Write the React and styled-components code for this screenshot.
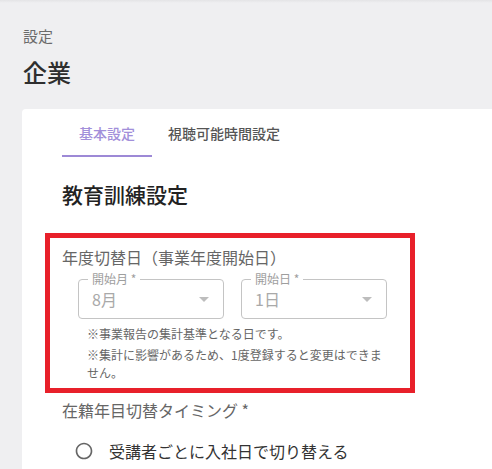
import React from "react";
import styled, { createGlobalStyle } from "styled-components";

const Global = createGlobalStyle`
  html, body { margin: 0; padding: 0; }
  body {
    background: linear-gradient(#e4e4e6 0, #efeff1 3px, #efeff1 100%);
    font-family: "Noto Sans CJK JP", "Noto Sans", sans-serif;
    min-height: 469px;
    overflow: hidden;
  }
`;

const Page = styled.div`
  padding: 26px 0 0 22px;
  width: 470px;
`;

const Breadcrumb = styled.div`
  font-size: 15px;
  line-height: 20px;
  color: #6b6b6b;
  padding-left: 1px;
`;

const Title = styled.h1`
  margin: 10px 0 0 1px;
  font-size: 24px;
  line-height: 32px;
  font-weight: 500;
  color: #2e2e2e;
`;

const Card = styled.div`
  margin-top: 21px;
  background: #fff;
  border-radius: 4px 0 0 0;
  padding: 0 0 40px 40px;
  min-height: 400px;
`;

const Tabs = styled.div`
  display: flex;
  height: 48px;
`;

const Tab = styled.div`
  box-sizing: border-box;
  min-width: 90px;
  padding: 0 16px;
  display: flex;
  align-items: center;
  justify-content: center;
  font-size: 14px;
  font-weight: 500;
  color: ${(p) => (p.$active ? "#a28fda" : "#555")};
  border-bottom: 2px solid ${(p) => (p.$active ? "#9d89d6" : "transparent")};
  padding-top: 2px;
`;

const SectionTitle = styled.h2`
  margin: 23px 0 0;
  font-size: 21px;
  line-height: 28px;
  font-weight: 500;
  color: #222;
`;

const Highlight = styled.div`
  box-sizing: border-box;
  width: 370px;
  margin: 25px 0 0 -17px;
  border: 5px solid #e8202a;
  padding: 7px 12px 6px 12px;
`;

const FieldLabel = styled.div`
  font-size: 16px;
  line-height: 24px;
  color: #666;
`;

const SelectRow = styled.div`
  display: flex;
  gap: 17px;
  margin: 10px 0 0 16px;
`;

const SelectBox = styled.div`
  position: relative;
  box-sizing: border-box;
  width: 146px;
  height: 40px;
  border: 1px solid #c4c4c4;
  border-radius: 4px;
  display: flex;
  align-items: center;
  padding: 0 14px 0 13px;
`;

const SelectLabel = styled.span`
  position: absolute;
  top: -8px;
  left: 9px;
  padding: 0 4px;
  background: #fff;
  font-size: 12px;
  line-height: 14px;
  color: #9e9e9e;
`;

const SelectValue = styled.span`
  flex: 1;
  font-size: 16px;
  line-height: 20px;
  color: #a9a9a9;
`;

const Notes = styled.div`
  margin: 6px 0 0 25px;
  width: 300px;
  font-size: 12px;
  line-height: 18px;
  color: #666;
  display: flex;
  flex-direction: column;
  gap: 3px;
`;

const Note = styled.p`
  margin: 0;
`;

const TimingLabel = styled(FieldLabel)`
  margin-top: 5px;
`;

const RadioRow = styled.label`
  display: flex;
  align-items: center;
  gap: 15px;
  height: 42px;
  margin-top: 8px;
  padding-left: 12px;
  font-size: 16px;
  color: #333;
`;

const Arrow = () => (
  <svg width="10" height="5" viewBox="0 0 10 5">
    <path d="M0 0l5 5 5-5z" fill="#bdbdbd" />
  </svg>
);

const RadioIcon = () => (
  <svg width="20" height="20" viewBox="0 0 24 24">
    <path
      fill="#666"
      d="M12 2C6.48 2 2 6.48 2 12s4.48 10 10 10 10-4.48 10-10S17.52 2 12 2zm0 18c-4.42 0-8-3.58-8-8s3.58-8 8-8 8 3.58 8 8-3.58 8-8 8z"
    />
  </svg>
);

const Select = ({ label, value }) => (
  <SelectBox>
    <SelectLabel>{label}</SelectLabel>
    <SelectValue>{value}</SelectValue>
    <Arrow />
  </SelectBox>
);

export default function App() {
  return (
    <>
      <Global />
      <Page>
        <Breadcrumb>設定</Breadcrumb>
        <Title>企業</Title>
        <Card>
          <Tabs>
            <Tab $active>基本設定</Tab>
            <Tab>視聴可能時間設定</Tab>
          </Tabs>
          <SectionTitle>教育訓練設定</SectionTitle>
          <Highlight>
            <FieldLabel>年度切替日（事業年度開始日）</FieldLabel>
            <SelectRow>
              <Select label="開始月 *" value="8月" />
              <Select label="開始日 *" value="1日" />
            </SelectRow>
            <Notes>
              <Note>※事業報告の集計基準となる日です。</Note>
              <Note>※集計に影響があるため、1度登録すると変更はできません。</Note>
            </Notes>
          </Highlight>
          <TimingLabel>在籍年目切替タイミング *</TimingLabel>
          <RadioRow>
            <RadioIcon />
            受講者ごとに入社日で切り替える
          </RadioRow>
        </Card>
      </Page>
    </>
  );
}
